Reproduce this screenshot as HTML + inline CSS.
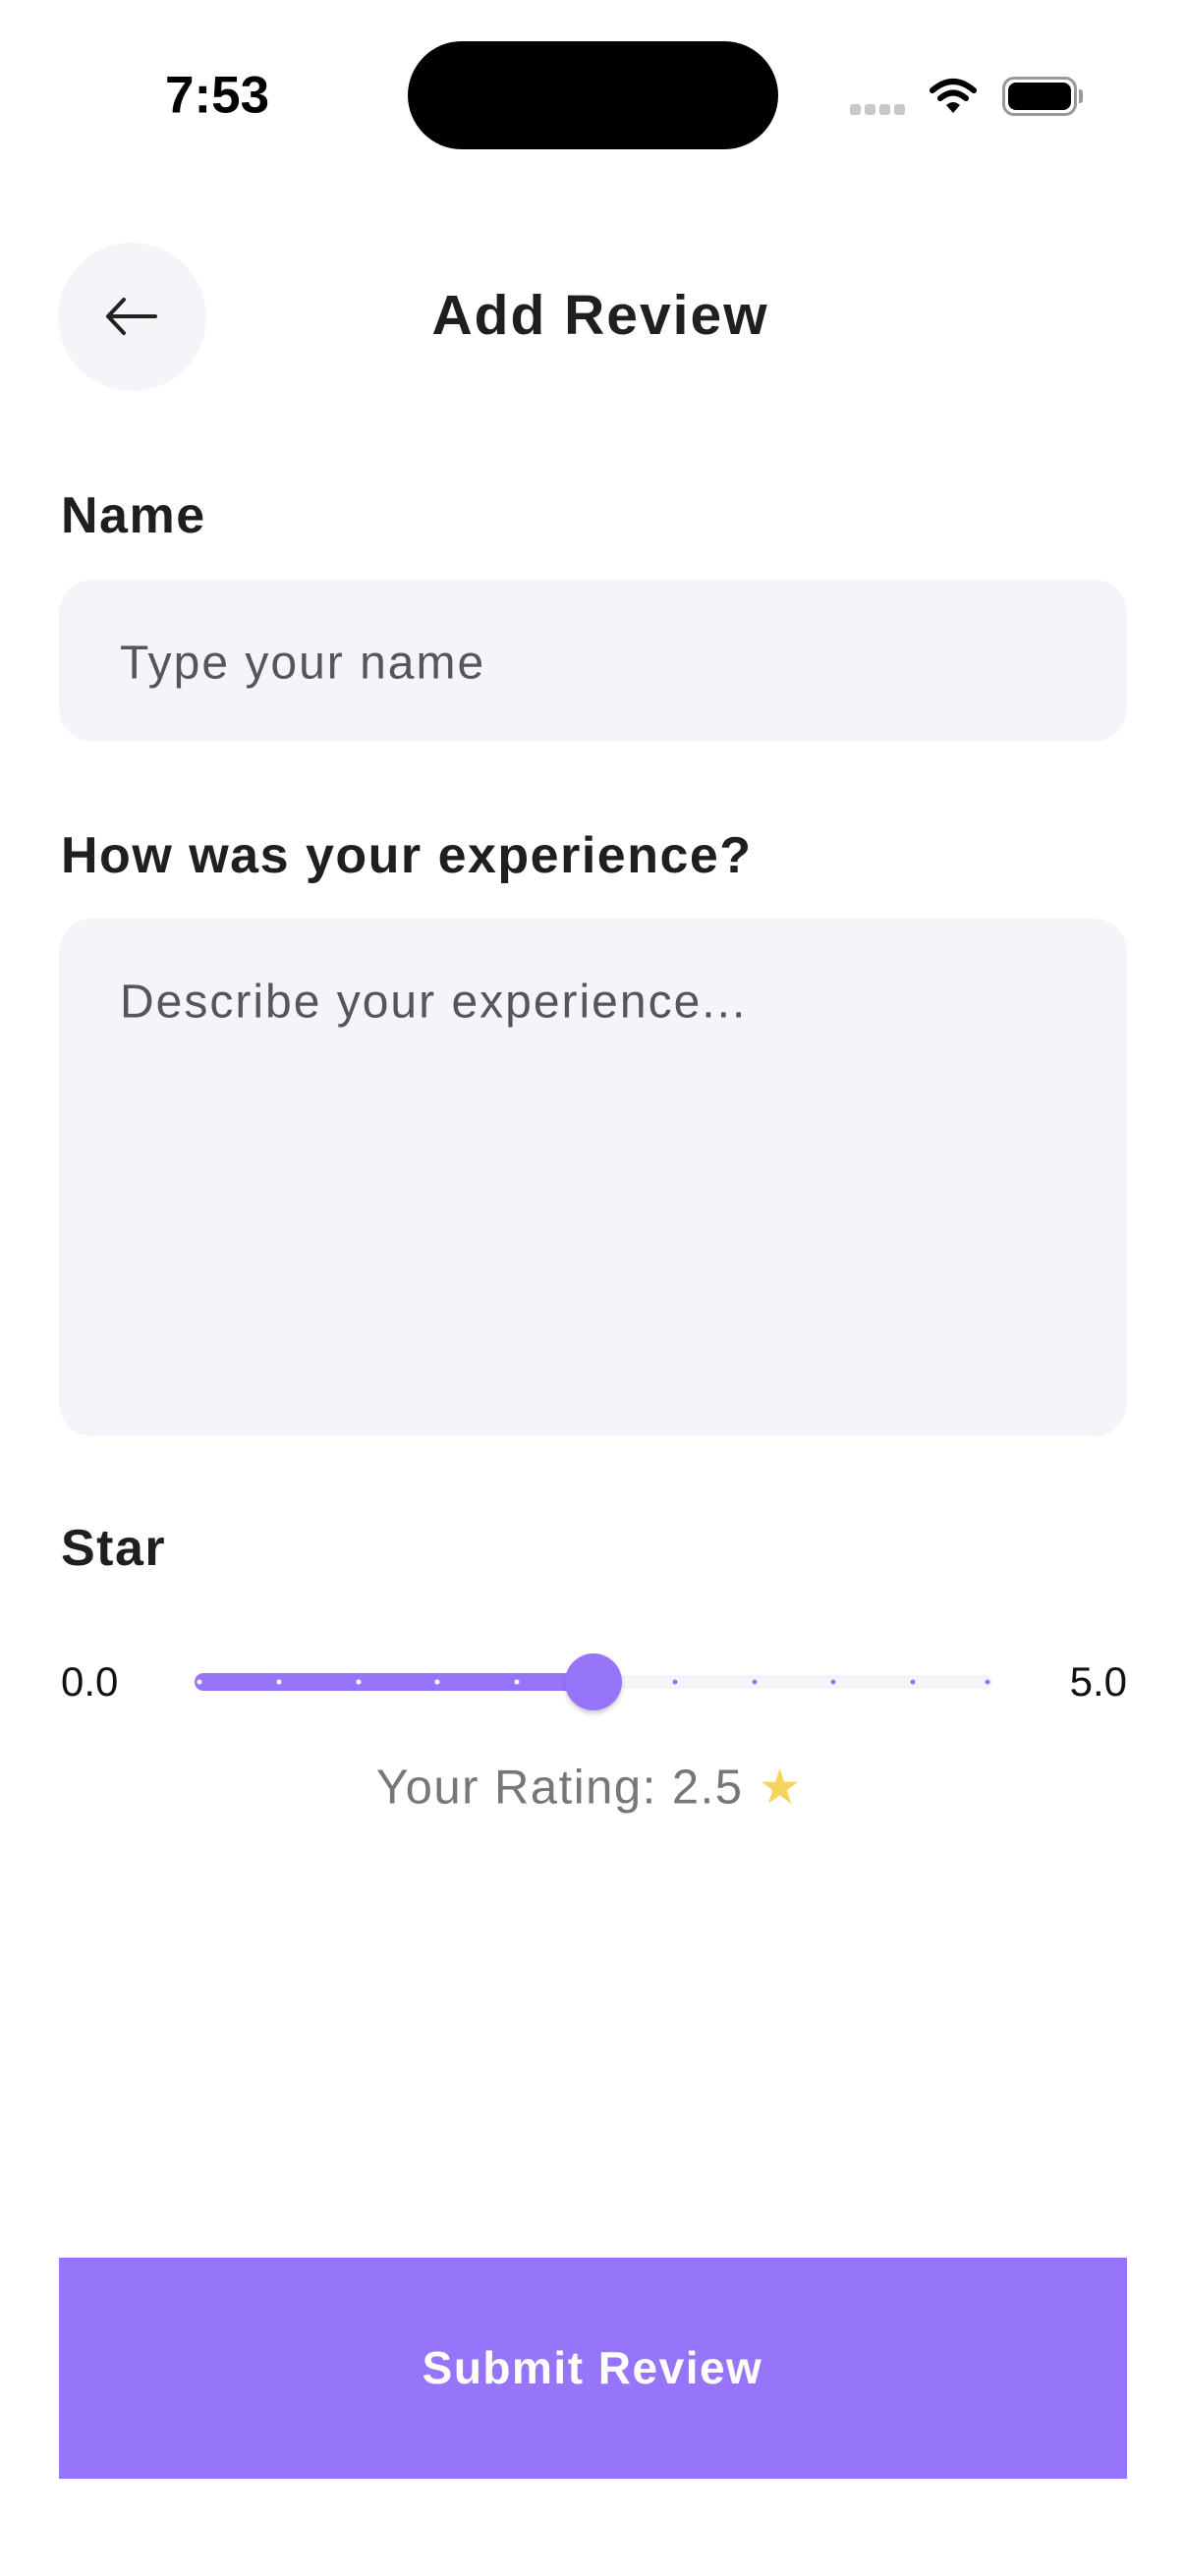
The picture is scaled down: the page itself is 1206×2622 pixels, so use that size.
<!DOCTYPE html>
<html><head><meta charset="utf-8"><style>
*{margin:0;padding:0;box-sizing:border-box}
body{width:1206px;height:2622px;background:#fff;position:relative;font-family:"Liberation Sans",sans-serif;color:#1c1c1e;overflow:hidden}
.a{position:absolute}
.lbl{position:absolute;left:62px;font-size:52px;font-weight:bold;color:#1f1f22;transform:translateY(-50%);letter-spacing:1.5px;white-space:nowrap}
.box{position:absolute;left:60px;width:1087px;background:#f4f5f9;border-radius:34px}
.ph{position:absolute;left:122px;font-size:48px;color:#55555c;letter-spacing:2px;transform:translateY(-50%);white-space:nowrap}
</style></head><body>
<div class="a" style="left:168px;top:97px;transform:translateY(-50%);font-size:53px;font-weight:bold;color:#000">7:53</div>
<div class="a" style="left:415px;top:42px;width:377px;height:110px;background:#000;border-radius:55px"></div>
<div class="a" style="left:865px;top:106px;width:60px;height:12px">
<span class="a" style="left:0;width:11px;height:11px;border-radius:3px;background:#c8c8c8"></span>
<span class="a" style="left:15px;width:11px;height:11px;border-radius:3px;background:#c8c8c8"></span>
<span class="a" style="left:30px;width:11px;height:11px;border-radius:3px;background:#c8c8c8"></span>
<span class="a" style="left:45px;width:11px;height:11px;border-radius:3px;background:#c8c8c8"></span></div>
<svg class="a" style="left:945px;top:78px" width="50" height="40" viewBox="0 0 50 40"><path d="M4 14 Q25 -4 46 14" stroke="#000" stroke-width="6" fill="none" stroke-linecap="round"/><path d="M12 22 Q25 11 38 22" stroke="#000" stroke-width="6" fill="none" stroke-linecap="round"/><path d="M18 29 L25 37 L32 29 Q25 23 18 29Z" fill="#000"/></svg>
<div class="a" style="left:1020px;top:78px;width:76px;height:40px;border:3px solid #999;border-radius:12px"></div>
<div class="a" style="left:1026px;top:84px;width:64px;height:28px;background:#000;border-radius:8px"></div>
<div class="a" style="left:1098px;top:91px;width:4px;height:14px;background:#999;border-radius:0 3px 3px 0"></div>
<div class="a" style="left:59px;top:247px;width:151px;height:151px;border-radius:50%;background:#f4f5f9"></div>
<svg class="a" style="left:104px;top:297px" width="60" height="50" viewBox="0 0 60 50"><path d="M54 25 H6 M22 8 L6 25 L22 42" stroke="#222" stroke-width="4" fill="none" stroke-linecap="round" stroke-linejoin="round"/></svg>
<div class="a" style="left:611px;top:321px;transform:translate(-50%,-50%);font-size:57px;font-weight:bold;color:#1f1f22;letter-spacing:2px;white-space:nowrap">Add Review</div>
<div class="lbl" style="top:525px">Name</div>
<div class="box" style="top:590px;height:165px"></div>
<div class="ph" style="top:675px">Type your name</div>
<div class="lbl" style="top:871px">How was your experience?</div>
<div class="box" style="top:935px;height:527px"></div>
<div class="ph" style="top:1020px">Describe your experience...</div>
<div class="lbl" style="top:1576px">Star</div>
<div class="a" style="left:62px;top:1712px;transform:translateY(-50%);font-size:42px;color:#111">0.0</div>
<div class="a" style="left:1147px;top:1712px;transform:translate(-100%,-50%);font-size:42px;color:#111">5.0</div>
<div class="a" style="left:198px;top:1705px;width:812px;height:14px;background:#f4f5f9;border-radius:7px"></div>
<div class="a" style="left:198px;top:1703px;width:410px;height:18px;background:#9775fa;border-radius:9px"></div>
<svg class="a" style="left:198px;top:1700px" width="812" height="24"><g fill="#fff"><circle cx="5" cy="12" r="2.5"/><circle cx="86" cy="12" r="2.5"/><circle cx="167" cy="12" r="2.5"/><circle cx="247" cy="12" r="2.5"/><circle cx="328" cy="12" r="2.5"/></g><g fill="#9775fa"><circle cx="489" cy="12" r="2.5"/><circle cx="570" cy="12" r="2.5"/><circle cx="650" cy="12" r="2.5"/><circle cx="731" cy="12" r="2.5"/><circle cx="807" cy="12" r="2.5"/></g></svg>
<div class="a" style="left:575px;top:1683px;width:58px;height:58px;border-radius:50%;background:#9775fa;box-shadow:0 3px 5px rgba(0,0,0,.2)"></div>
<div class="a" style="left:600px;top:1819px;transform:translate(-50%,-50%);font-size:49px;color:#777;white-space:nowrap;letter-spacing:1.5px">Your Rating: 2.5 <span style="color:#f7d35c">★</span></div>
<div class="a" style="left:60px;top:2298px;width:1087px;height:225px;background:#9775fa"></div>
<div class="a" style="left:603px;top:2410px;transform:translate(-50%,-50%);font-size:46px;font-weight:bold;color:#fff;letter-spacing:1.5px;white-space:nowrap">Submit Review</div>
</body></html>
